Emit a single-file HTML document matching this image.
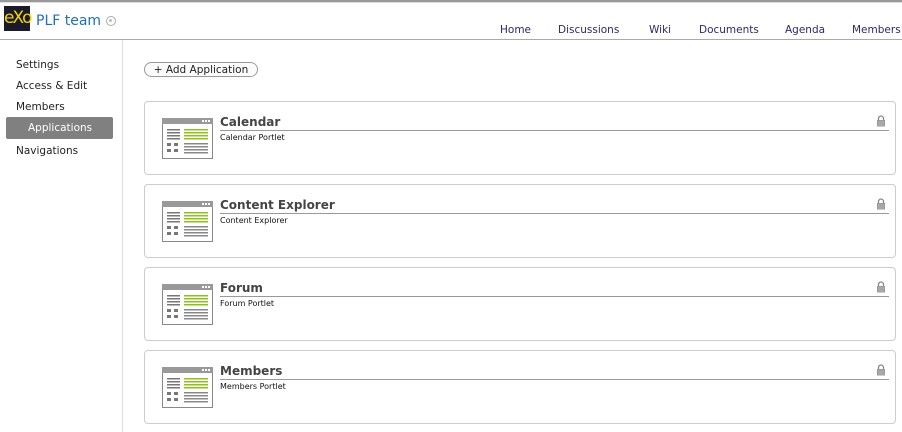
<!DOCTYPE html>
<html><head><meta charset="utf-8"><style>
*{margin:0;padding:0;box-sizing:border-box}
body{width:902px;height:432px;background:#fff;font-family:"DejaVu Sans","Liberation Sans",sans-serif;position:relative;overflow:hidden}
.top{position:absolute;left:0;top:0;width:902px;height:3px;background:#999;border-bottom:1px solid #ddd}
.hdr{position:absolute;left:0;top:39px;width:902px;height:1px;background:#aaa}
.logo{position:absolute;left:4px;top:6px;width:26px;height:25px;background:#1a1a2a;color:#f2d600;font-size:17px;line-height:25px;letter-spacing:-2px;text-align:center}
.title{position:absolute;left:36px;top:13px;font-size:14px;color:#1f6fb5}
.gear{position:absolute;left:106px;top:16px;width:10px;height:10px;border:1.5px solid #aaa;border-radius:50%}
.gear:after{content:"";position:absolute;left:2px;top:2px;width:3px;height:3px;background:#bbb;border-radius:50%}
.nav{position:absolute;top:24px;font-size:10.5px;color:#2a2a66}
.side{position:absolute;left:122px;top:40px;width:1px;height:392px;background:#ddd}
.si{position:absolute;left:16px;font-size:10.5px;color:#222}
.sel{position:absolute;left:6px;top:117px;width:107px;height:22px;background:#808080;border-radius:2px;color:#fff;font-size:10.5px;padding-left:22px;line-height:23px}
.btn{position:absolute;left:144px;top:62px;width:114px;height:15px;border:1px solid #999;border-radius:8px;font-size:10.5px;line-height:14px;text-align:center;color:#222;background:#fbfbfb}
.card{position:absolute;left:144px;width:752px;height:74px;border:1px solid #ccc;border-radius:4px}
.card svg.ic{position:absolute;left:17px;top:16px}
.card h3{position:absolute;left:75px;top:13px;font-size:12px;color:#444;font-weight:bold}
.card .ln{position:absolute;left:75px;top:28px;width:669px;height:1px;background:#999}
.card .sub{position:absolute;left:75px;top:31px;font-size:8px;color:#111}
.lock{position:absolute;left:731px;top:13px}
</style></head><body>
<div class="top"></div>
<div class="logo">eXo</div>
<div class="title">PLF team</div>
<div class="gear"></div>
<div class="nav" style="left:500px">Home</div>
<div class="nav" style="left:558px">Discussions</div>
<div class="nav" style="left:649px">Wiki</div>
<div class="nav" style="left:699px">Documents</div>
<div class="nav" style="left:785px">Agenda</div>
<div class="nav" style="left:852px">Members</div>
<div class="hdr"></div>
<div class="side"></div>
<div class="si" style="top:59px">Settings</div>
<div class="si" style="top:80px">Access &amp; Edit</div>
<div class="si" style="top:101px">Members</div>
<div class="sel">Applications</div>
<div class="si" style="top:145px">Navigations</div>
<div class="btn">+ Add Application</div>
<svg width="0" height="0" style="position:absolute"><defs>
<symbol id="ic" viewBox="0 0 51 41">
<rect x="0.5" y="0.5" width="50" height="40" fill="#fff" stroke="#888"/>
<rect x="0" y="0" width="51" height="6" fill="#999"/>
<rect x="40" y="2" width="2" height="2" fill="#fff"/><rect x="43" y="2" width="2" height="2" fill="#fff"/><rect x="46" y="2" width="2" height="2" fill="#fff"/>
<g fill="#777"><rect x="5" y="11" width="13" height="1.5"/><rect x="5" y="14" width="13" height="1.5"/><rect x="5" y="17" width="13" height="1.5"/><rect x="5" y="20" width="13" height="1.5"/>
<rect x="5" y="25" width="4" height="3"/><rect x="12" y="25" width="4" height="3"/><rect x="5" y="31" width="4" height="3"/><rect x="12" y="31" width="4" height="3"/></g>
<g fill="#8cc21a"><rect x="22" y="11" width="24" height="1.5"/><rect x="22" y="14" width="24" height="1.5"/><rect x="22" y="17" width="24" height="1.5"/><rect x="22" y="20" width="24" height="1.5"/></g>
<g fill="#888"><rect x="22" y="25" width="24" height="1.5"/><rect x="22" y="28" width="24" height="1.5"/><rect x="22" y="31" width="24" height="1.5"/><rect x="22" y="34" width="24" height="1.5"/></g>
</symbol>
<symbol id="lk" viewBox="0 0 10 12"><path d="M2.5 5V3.5a2.5 2.5 0 0 1 5 0V5" fill="none" stroke="#888" stroke-width="1.3"/><rect x="1" y="5" width="8" height="6.5" fill="#999"/><path d="M3 6v5M5 6v5M7 6v5" stroke="#ccc" stroke-width=".6"/></symbol>
</defs></svg>
<div class="card" style="top:101px"><svg class="ic" width="51" height="41"><use href="#ic"/></svg><h3>Calendar</h3><div class="ln"></div><div class="sub">Calendar Portlet</div><svg class="lock" width="10" height="12"><use href="#lk"/></svg></div>
<div class="card" style="top:184px"><svg class="ic" width="51" height="41"><use href="#ic"/></svg><h3>Content Explorer</h3><div class="ln"></div><div class="sub">Content Explorer</div><svg class="lock" width="10" height="12"><use href="#lk"/></svg></div>
<div class="card" style="top:267px"><svg class="ic" width="51" height="41"><use href="#ic"/></svg><h3>Forum</h3><div class="ln"></div><div class="sub">Forum Portlet</div><svg class="lock" width="10" height="12"><use href="#lk"/></svg></div>
<div class="card" style="top:350px"><svg class="ic" width="51" height="41"><use href="#ic"/></svg><h3>Members</h3><div class="ln"></div><div class="sub">Members Portlet</div><svg class="lock" width="10" height="12"><use href="#lk"/></svg></div>
</body></html>
